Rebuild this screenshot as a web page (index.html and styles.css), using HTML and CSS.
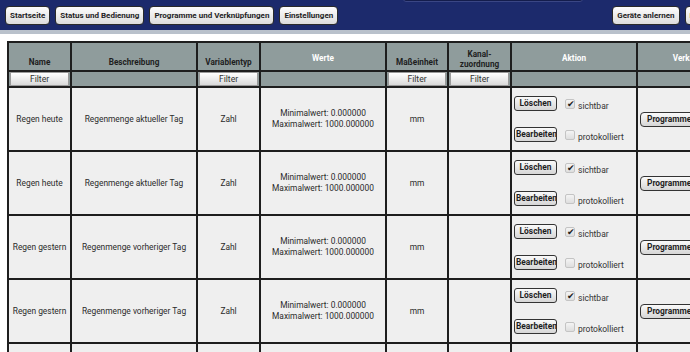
FILE: index.html
```html
<!DOCTYPE html>
<html lang="de">
<head>
<meta charset="utf-8">
<title>Systemvariablen</title>
<link rel="stylesheet" href="styles.css">
</head>
<body>
<header class="topbar">
  <nav class="nav">
    <button class="navbtn">Startseite</button>
    <button class="navbtn">Status und Bedienung</button>
    <button class="navbtn">Programme und Verknüpfungen</button>
    <button class="navbtn">Einstellungen</button>
  </nav>
  <div class="searchbox"></div>
  <nav class="nav nav-right">
    <button class="navbtn">Geräte anlernen</button>
    <button class="navbtn">Hilfe</button>
  </nav>
</header>
<div class="strip"></div>
<main class="content">
  <table class="grid">
    <colgroup>
      <col class="c-name"><col class="c-desc"><col class="c-type"><col class="c-val"><col class="c-unit"><col class="c-chan"><col class="c-act"><col class="c-link">
    </colgroup>
    <thead>
      <tr class="head">
        <th><div class="hd dark">Name</div></th>
        <th><div class="hd dark">Beschreibung</div></th>
        <th><div class="hd dark">Variablentyp</div></th>
        <th><div class="hd light">Werte</div></th>
        <th><div class="hd dark">Maßeinheit</div></th>
        <th><div class="hd dark two">Kanal-<br>zuordnung</div></th>
        <th><div class="hd light">Aktion</div></th>
        <th><div class="hd light">Verknüpfungen</div></th>
      </tr>
      <tr class="filters">
        <td><div class="filter">Filter</div></td>
        <td></td>
        <td><div class="filter">Filter</div></td>
        <td></td>
        <td><div class="filter">Filter</div></td>
        <td><div class="filter">Filter</div></td>
        <td></td>
        <td></td>
      </tr>
    </thead>
    <tbody>
      <tr class="row">
        <td>Regen heute</td>
        <td>Regenmenge aktueller Tag</td>
        <td>Zahl</td>
        <td>Minimalwert: 0.000000<br>Maximalwert: 1000.000000</td>
        <td>mm</td>
        <td></td>
        <td class="act">
          <div class="actgrid">
            <button class="btn">Löschen</button><span class="cb checked"></span><span class="lbl">sichtbar</span>
            <button class="btn">Bearbeiten</button><span class="cb"></span><span class="lbl">protokolliert</span>
          </div>
        </td>
        <td class="link"><button class="btn prog">Programme</button></td>
      </tr>
      <tr class="row">
        <td>Regen heute</td>
        <td>Regenmenge aktueller Tag</td>
        <td>Zahl</td>
        <td>Minimalwert: 0.000000<br>Maximalwert: 1000.000000</td>
        <td>mm</td>
        <td></td>
        <td class="act">
          <div class="actgrid">
            <button class="btn">Löschen</button><span class="cb checked"></span><span class="lbl">sichtbar</span>
            <button class="btn">Bearbeiten</button><span class="cb"></span><span class="lbl">protokolliert</span>
          </div>
        </td>
        <td class="link"><button class="btn prog">Programme</button></td>
      </tr>
      <tr class="row">
        <td>Regen gestern</td>
        <td>Regenmenge vorheriger Tag</td>
        <td>Zahl</td>
        <td>Minimalwert: 0.000000<br>Maximalwert: 1000.000000</td>
        <td>mm</td>
        <td></td>
        <td class="act">
          <div class="actgrid">
            <button class="btn">Löschen</button><span class="cb checked"></span><span class="lbl">sichtbar</span>
            <button class="btn">Bearbeiten</button><span class="cb"></span><span class="lbl">protokolliert</span>
          </div>
        </td>
        <td class="link"><button class="btn prog">Programme</button></td>
      </tr>
      <tr class="row">
        <td>Regen gestern</td>
        <td>Regenmenge vorheriger Tag</td>
        <td>Zahl</td>
        <td>Minimalwert: 0.000000<br>Maximalwert: 1000.000000</td>
        <td>mm</td>
        <td></td>
        <td class="act">
          <div class="actgrid">
            <button class="btn">Löschen</button><span class="cb checked"></span><span class="lbl">sichtbar</span>
            <button class="btn">Bearbeiten</button><span class="cb"></span><span class="lbl">protokolliert</span>
          </div>
        </td>
        <td class="link"><button class="btn prog">Programme</button></td>
      </tr>
      <tr class="row">
        <td>Regen Monat</td>
        <td>Regenmenge aktueller Monat</td>
        <td>Zahl</td>
        <td>Minimalwert: 0.000000<br>Maximalwert: 1000.000000</td>
        <td>mm</td>
        <td></td>
        <td class="act">
          <div class="actgrid">
            <button class="btn">Löschen</button><span class="cb checked"></span><span class="lbl">sichtbar</span>
            <button class="btn">Bearbeiten</button><span class="cb"></span><span class="lbl">protokolliert</span>
          </div>
        </td>
        <td class="link"><button class="btn prog">Programme</button></td>
      </tr>
    </tbody>
  </table>
</main>
</body>
</html>
```

FILE: styles.css
```css
html, body {
  margin: 0;
  padding: 0;
  background: #ffffff;
  overflow: hidden;
  width: 690px;
  height: 352px;
  font-family: Roboto, "Noto Sans", "Liberation Sans", sans-serif;
}

.topbar {
  display: flex;
  align-items: flex-start;
  height: 30px;
  background: #1c2a6c;
  overflow: hidden;
  white-space: nowrap;
}

.nav {
  display: flex;
  gap: 5px;
  margin-top: 6px;
  padding-left: 5px;
  flex-shrink: 0;
}

.nav-right {
  margin-left: 24px;
}

.navbtn {
  height: 19px;
  padding: 0 4px;
  border: 1px solid #2a2a2a;
  border-radius: 4px;
  background: linear-gradient(#fdfdfd, #dcdcdc);
  font-family: Roboto, "Noto Sans", sans-serif;
  font-weight: 700;
  font-size: 8px;
  color: #1e1e1e;
  flex-shrink: 0;
  cursor: pointer;
}

.searchbox {
  flex-shrink: 0;
  width: 180px;
  height: 21px;
  margin-top: -19px;
  margin-left: 65px;
  background: #141d4c;
  border: 1px solid #3a4684;
  border-radius: 3px;
  box-sizing: border-box;
}

.strip {
  height: 4px;
  background: #b9c1cb;
}

.content {
  padding: 7px 0 0 7px;
}

.grid {
  border-collapse: collapse;
  table-layout: fixed;
  width: 757px;
  font-size: 8.4px;
  color: #2b2b2b;
}

.c-name { width: 63px; }
.c-desc { width: 126px; }
.c-type { width: 63px; }
.c-val  { width: 126px; }
.c-unit { width: 62px; }
.c-chan { width: 63px; }
.c-act  { width: 126px; }
.c-link { width: 128px; }

.grid th,
.grid td {
  border: 2px solid #1e1e1e;
  text-align: center;
  padding: 0;
}

.head th {
  background: #8f9c9c;
}

.hd {
  height: 27px;
  display: flex;
  flex-direction: column;
  box-sizing: border-box;
  font-weight: 700;
  font-size: 8.2px;
  line-height: 10px;
}

.hd.dark {
  color: #1e1e1e;
  justify-content: flex-end;
  padding-bottom: 3px;
}

.hd.two {
  padding-bottom: 1px;
}

.hd.light {
  color: #ffffff;
  justify-content: flex-start;
  padding-top: 10px;
}

.filters td {
  height: 14px;
  background: #8f9c9c;
  padding: 0 1px;
}

.filter {
  height: 14px;
  line-height: 13px;
  background: linear-gradient(#ffffff, #dadada);
  border: 1px solid #9a9a9a;
  box-sizing: border-box;
  font-size: 8.6px;
  color: #333;
}

.row td {
  height: 62px;
  background: #efefef;
  line-height: 11px;
  vertical-align: middle;
}

.row td.act {
  text-align: left;
  padding-left: 2px;
}

.actgrid {
  display: grid;
  grid-template-columns: 43px 18px auto;
  grid-template-rows: 15px 15px;
  row-gap: 16px;
  align-items: center;
}

.btn {
  height: 15px;
  padding: 0 1px;
  border: 1px solid #333;
  border-radius: 3px;
  background: linear-gradient(#fafafa, #d6d6d6);
  font-family: Roboto, "Noto Sans", sans-serif;
  font-weight: 700;
  font-size: 8.4px;
  color: #1e1e1e;
  white-space: nowrap;
  overflow: hidden;
  width: 43px;
  line-height: 13px;
  cursor: pointer;
}

.cb {
  margin-left: 8px;
  width: 10px;
  height: 10px;
  box-sizing: border-box;
  border: 1px solid #c4c4c4;
  border-radius: 2px;
  background: linear-gradient(#f4f4f4, #dedede);
  position: relative;
}

.cb.checked::after {
  content: "\2714";
  position: absolute;
  left: 1px;
  top: -2px;
  font-size: 9px;
  line-height: 12px;
  color: #222;
}

.lbl {
  margin-left: 3px;
  padding-top: 5px;
  font-size: 8.5px;
  color: #333;
  white-space: nowrap;
}

.row td.link {
  text-align: left;
  padding-left: 2px;
}

.btn.prog {
  width: 70px;
  padding: 0 6px;
  text-align: left;
  border-radius: 4px;
}
```
